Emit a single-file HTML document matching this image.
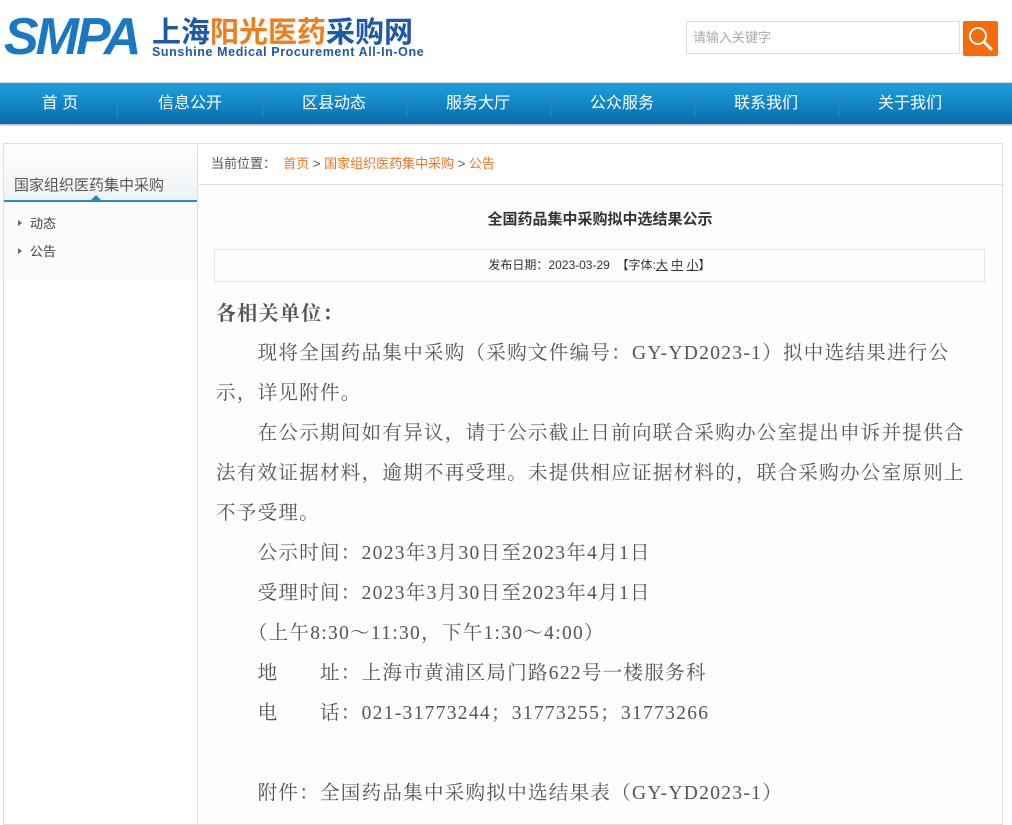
<!DOCTYPE html>
<html><head><meta charset="utf-8"><style>
body{margin:0;width:1012px;height:814px;overflow:hidden;background:#fff;font-family:"Liberation Sans","Noto Sans CJK SC",sans-serif;position:relative}
.abs{position:absolute}
.nav{left:0;top:82px;width:1012px;height:41px;background:linear-gradient(#1ea0de,#0a6cab);box-shadow:0 1px 2px #999;border-top:1px solid #ddd}
.nav span{position:absolute;top:0;line-height:41px;color:#fff;font-size:16px;transform:translateX(-50%);white-space:nowrap}
.nav i{position:absolute;top:8px;width:1px;height:26px;background:#2d8cc6}
.side{left:3px;top:143px;width:194px;height:680px;border:1px solid #ddd;border-right:none;background:#fff}
.main{left:197px;top:143px;width:804px;height:680px;border:1px solid #ddd;background:#fdfdfd}
.body{position:absolute;left:18px;top:150px;font-family:"Liberation Serif","Noto Serif CJK SC",serif;font-size:19.5px;letter-spacing:1.3px;color:#555;line-height:40px;white-space:nowrap}
.body div{height:40px}
</style></head><body>
<div class="abs" style="left:4px;top:12px;font:italic bold 52px 'Liberation Sans',sans-serif;color:#1a78c2;letter-spacing:-3px;line-height:50px">SMPA</div>
<div class="abs" style="left:152px;top:17px;font-size:29px;font-weight:bold;line-height:32px;font-family:'Liberation Sans','Noto Sans CJK SC',sans-serif;letter-spacing:0px"><span style="color:#1d59a8">上海</span><span style="color:#ee7d1a">阳光医药</span><span style="color:#1d59a8">采购网</span></div>
<div class="abs" style="left:152px;top:45px;font-size:12.5px;font-weight:bold;color:#1d59a8;letter-spacing:0.6px">Sunshine Medical Procurement All-In-One</div>
<div class="abs" style="left:686px;top:21px;width:274px;height:33px;border:1px solid #ddd;box-sizing:border-box;font-size:13px;color:#aaa;line-height:31px;padding-left:6px">请输入关键字</div>
<div class="abs" style="left:963px;top:21px;width:35px;height:35px;background:#f96b0a;border-radius:2px"><svg width="35" height="35"><circle cx="15" cy="15" r="8" fill="none" stroke="#fff" stroke-width="2"/><path d="M21 21l7 7" stroke="#fff" stroke-width="3" stroke-linecap="round"/></svg></div>
<div class="abs nav">
<span style="left:60px">首 页</span><span style="left:190px">信息公开</span><span style="left:334px">区县动态</span><span style="left:478px">服务大厅</span><span style="left:622px">公众服务</span><span style="left:766px">联系我们</span><span style="left:910px">关于我们</span>
<i style="left:117px"></i><i style="left:262px"></i><i style="left:406px"></i><i style="left:550px"></i><i style="left:694px"></i><i style="left:838px"></i>
</div>
<div class="abs side">
<div style="height:56px;background:linear-gradient(#fff,#eef2f5);border-bottom:2px solid #2a88c4;position:relative"><div style="position:absolute;left:10px;top:30px;font-size:15px;color:#555">国家组织医药集中采购</div><div style="position:absolute;left:87px;bottom:0;border:5px solid transparent;border-bottom-color:#2a88c4;border-top:none"></div></div>
<div style="background:#fafbfc;height:70px;padding-top:8px;font-size:13px;color:#444">
<div style="height:28px;line-height:28px;padding-left:26px;position:relative"><span style="position:absolute;left:14px;top:10px;border:3px solid transparent;border-left:4px solid #666;border-right:none"></span>动态</div>
<div style="height:28px;line-height:28px;padding-left:26px;position:relative"><span style="position:absolute;left:14px;top:10px;border:3px solid transparent;border-left:4px solid #666;border-right:none"></span>公告</div>
</div></div>
<div class="abs main">
<div style="height:40px;border-bottom:1px solid #ddd;background:#fff;line-height:40px;font-size:13px;color:#555;padding-left:13px">当前位置： &nbsp;<span style="color:#f5731e">首页</span> &gt; <span style="color:#f5731e">国家组织医药集中采购</span> &gt; <span style="color:#f5731e">公告</span></div>
<div style="position:absolute;top:64px;width:100%;text-align:center;font-size:15px;font-weight:bold;color:#333">全国药品集中采购拟中选结果公示</div>
<div style="position:absolute;left:16px;top:105px;width:771px;height:33px;border:1px solid #e4e4e4;box-sizing:border-box;text-align:center;line-height:31px;font-size:12px;color:#333">发布日期：2023-03-29 &nbsp;【字体:<u>大</u> <u>中</u> <u>小</u>】</div>
<div class="body">
<div style="font-weight:bold;font-size:20px">各相关单位：</div>
<div>　　现将全国药品集中采购（采购文件编号：GY-YD2023-1）拟中选结果进行公</div>
<div>示，详见附件。</div>
<div>　　在公示期间如有异议，请于公示截止日前向联合采购办公室提出申诉并提供合</div>
<div>法有效证据材料，逾期不再受理。未提供相应证据材料的，联合采购办公室原则上</div>
<div>不予受理。</div>
<div>　　公示时间：2023年3月30日至2023年4月1日</div>
<div>　　受理时间：2023年3月30日至2023年4月1日</div>
<div>　　（上午8:30～11:30，下午1:30～4:00）</div>
<div>　　地　　址：上海市黄浦区局门路622号一楼服务科</div>
<div>　　电　　话：021-31773244；31773255；31773266</div>
<div style="height:40px"></div>
<div>　　附件：全国药品集中采购拟中选结果表（GY-YD2023-1）</div>
</div>
</div>
</body></html>
